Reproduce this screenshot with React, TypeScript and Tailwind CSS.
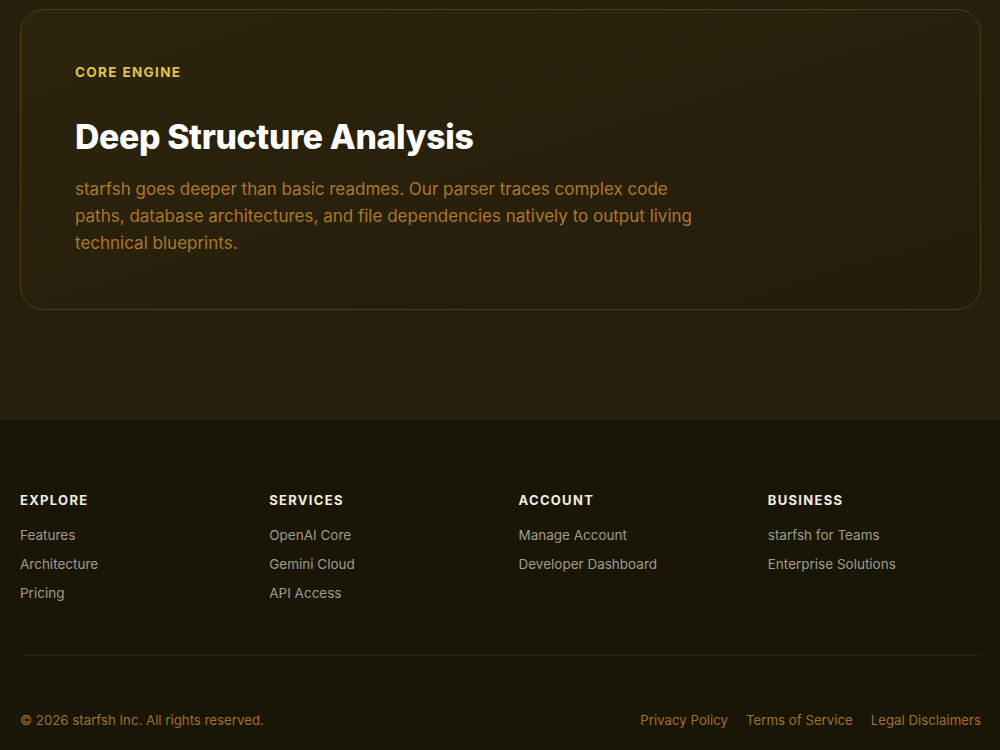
const columns = [
  { title: "Explore", links: ["Features", "Architecture", "Pricing"] },
  { title: "Services", links: ["OpenAI Core", "Gemini Cloud", "API Access"] },
  { title: "Account", links: ["Manage Account", "Developer Dashboard"] },
  { title: "Business", links: ["starfsh for Teams", "Enterprise Solutions"] },
];

export default function App() {
  return (
    <div
      className="min-h-screen bg-[#1a1607] flex flex-col"
      style={{ fontFamily: "Inter, 'Noto Sans', sans-serif" }}
    >
      <section className="bg-[#261f0b] pl-5 pr-[19px] pt-[9px] pb-[108px] border-b border-[#2e2610]">
        <div className="rounded-[24px] border border-[#4e3d14] bg-gradient-to-br from-[#2c240e] to-[#241d0a] pl-[54px] pr-10 pt-[52px] pb-[54px] h-[301px]">
          <p className="text-[13.5px] font-bold tracking-[0.1em] text-[#e2c24f] leading-5">
            CORE ENGINE
          </p>
          <h2 className="mt-[34px] text-[33.75px] leading-[42px] font-extrabold text-white tracking-[-0.01em]">
            Deep Structure Analysis
          </h2>
          <p className="mt-[18px] max-w-[640px] text-[17px] leading-[27px] text-[#ad772b]">
            starfsh goes deeper than basic readmes. Our parser traces complex code paths, database architectures, and file dependencies natively to output living technical blueprints.
          </p>
        </div>
      </section>

      <footer className="pl-5 pr-[19px] pt-[71px] pb-[20px]">
        <div className="grid grid-cols-4 gap-9">
          {columns.map((c) => (
            <div key={c.title}>
              <h3 className="text-[13px] font-bold uppercase tracking-[0.1em] text-[#f1ede2] leading-5">
                {c.title}
              </h3>
              <ul className="mt-[15px] flex flex-col gap-[9px]">
                {c.links.map((l) => (
                  <li key={l} className="text-[13.5px] leading-5 text-[#a19b8b]">
                    {l}
                  </li>
                ))}
              </ul>
            </div>
          ))}
        </div>
        <div className="mt-[52px] border-t border-[#2b2412]" />
        <div className="mt-[54px] flex items-center justify-between text-[13.25px] leading-5 text-[#a0702a]">
          <span>© 2026 starfsh Inc. All rights reserved.</span>
          <div className="flex gap-[18px]">
            <span>Privacy Policy</span>
            <span>Terms of Service</span>
            <span>Legal Disclaimers</span>
          </div>
        </div>
      </footer>
    </div>
  );
}
